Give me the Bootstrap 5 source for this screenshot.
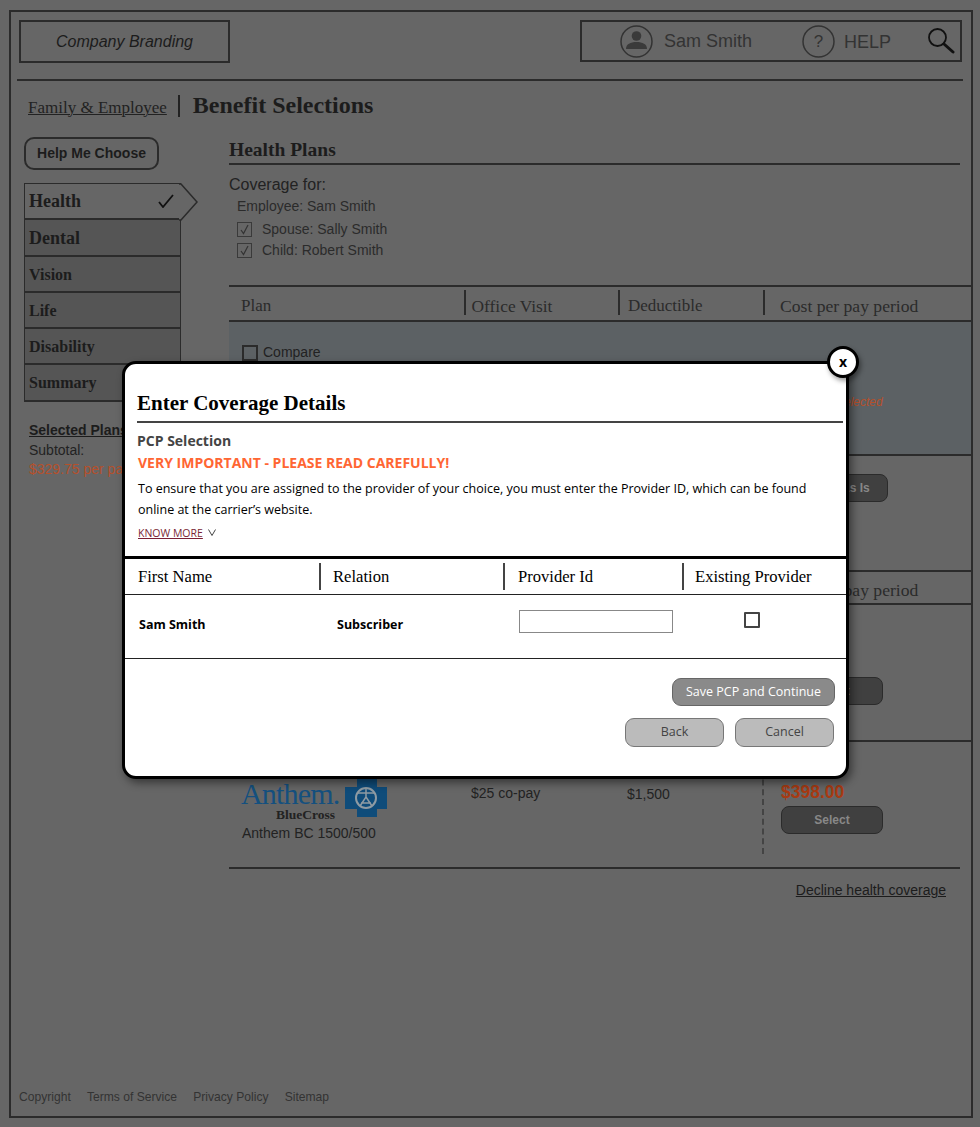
<!DOCTYPE html>
<html lang="en">
<head>
    <meta charset="UTF-8">
    <meta name="viewport" content="width=device-width, initial-scale=1.0">
    <title>Benefit Selections</title>
    <link rel="stylesheet" href="https://cdn.jsdelivr.net/npm/bootstrap@5.3.0/dist/css/bootstrap.min.css">
    <style>
        html, body { height: 1127px; overflow: hidden; }
        body { background: #666; color: #222; font-family: "Liberation Sans", Arial, sans-serif; position: relative; }
        .serif { font-family: "Liberation Serif", "Times New Roman", serif; }
        .opensans { font-family: "Open Sans", "Liberation Sans", sans-serif; }

        .page-frame { margin: 10px 0 0 9px; width: 964px; height: 1108px; border: 2px solid #2b2b2b; display: flex; flex-direction: column; }
        .top-bar { margin: 8px 9px 0 8px; height: 43px; }
        .brand-box { width: 211px; height: 43px; border: 2px solid #2b2b2b; font-style: italic; font-size: 16px; color: #1c1c1c; padding-top: 1px; }
        .user-box { width: 382px; height: 42px; border: 2px solid #2b2b2b; font-size: 18px; color: #333; padding-left: 38px; white-space: nowrap; }
        .user-box svg { flex: none; }
        .user-name { margin-left: 11px; }
        .help-icon { margin-left: 50px; }
        .help-label { font-size: 18px; margin: 2px 0 0 9px; }
        .search-icon { margin-left: 36px; margin-top: -2px; }
        .top-rule { margin: 16px 8px 0 6px; border-top: 2px solid #2b2b2b; }

        .crumbs { margin: 11px 0 0 17px; height: 27px; }
        .crumb-link { font-size: 17px; color: #222; text-decoration: underline; text-decoration-thickness: 1px; padding-top: 5px; }
        .crumb-bar { width: 2px; height: 22px; background: #222; margin: 1px 13px 0 11px; }
        .crumb-title { font-size: 24px; font-weight: 700; color: #1c1c1c; line-height: 27px; }

        .work-area { margin-top: 18px; flex: 1; min-height: 0; }
        .side-col { width: 175px; margin-left: 13px; flex: none; position: relative; }
        .help-btn { width: 135px; height: 33px; border: 2px solid #2b2b2b; border-radius: 10px; background: transparent; font-size: 14px; font-weight: 700; color: #1c1c1c; padding: 0; display: block; }
        .step-list { margin-top: 13px; width: 157px; border: 1.5px solid #2b2b2b; border-bottom-width: 2px; background: #555; position: relative; }
        .step-item { height: 36.3px; padding-left: 4px; font-weight: 700; font-size: 18px; color: #1c1c1c; border-bottom: 2px solid #2b2b2b; line-height: 36px; }
        .step-item:last-child { border-bottom: 0; height: 35px; }
        .step-small { font-size: 16px; }
        .step-active { background: #666; display: flex; align-items: center; justify-content: space-between; padding-right: 6px; }
        .step-arrow { position: absolute; left: 154px; top: -1.5px; }
        .selected-head { margin: 18px 0 0 5px; font-size: 14px; font-weight: 700; text-decoration: underline; color: #1c1c1c; white-space: nowrap; }
        .selected-sub { margin-left: 5px; font-size: 14px; line-height: 19px; white-space: nowrap; }
        .selected-cost { color: #b5502c; }

        .main-col { margin-left: 30px; flex: 1; min-width: 0; }
        .plans-title { font-size: 19.5px; font-weight: 700; color: #1c1c1c; height: 28px; line-height: 26px; margin-right: 11px; border-bottom: 2px solid #2b2b2b; }
        .coverage-head { font-size: 16px; margin-top: 10px; line-height: 20px; }
        .coverage-line { font-size: 14px; margin-left: 8px; line-height: 21px; display: flex; align-items: center; color: #2b2b2b; }
        .coverage-first { margin-top: 1px; margin-bottom: 2px; }
        .coverage-box { width: 15px; height: 15px; border: 1.5px solid #3a3a3a; margin-right: 10px; display: flex; align-items: center; justify-content: center; }

        .plan-head { height: 37px; border-top: 2px solid #2b2b2b; border-bottom: 2px solid #2b2b2b; font-size: 17px; color: #2b2b2b; margin-top: 24px; }
        .plan-head-low { height: 35px; margin-top: 0; }
        .col-plan { width: 234.5px; }
        .col-visit { width: 154.5px; }
        .col-ded { width: 145px; }
        .col-cost { flex: 1; }
        .head-cell { position: relative; line-height: 38px; white-space: nowrap; }
        .plan-head-low .head-cell { line-height: 36px; }
        .col-plan.head-cell { padding-left: 12px; }
        .col-visit.head-cell { padding-left: 8px; font-size: 17.4px; }
        .col-ded.head-cell { padding-left: 10px; }
        .col-cost.head-cell { padding-left: 17px; font-size: 17.6px; }
        .head-cell + .head-cell::before { content: ""; position: absolute; left: 0; top: 3px; height: 25px; width: 2px; background: #2b2b2b; }
        .plan-selected { height: 134px; background: #5c6164; border-bottom: 2px solid #2b2b2b; position: relative; padding: 20px 0 0 13px; font-size: 14px; }
        .compare-box { width: 16px; height: 16px; border: 2px solid #2b2b2b; margin-right: 5px; }
        .selected-note { position: absolute; left: 555px; top: 71px; font-size: 12px; font-style: italic; color: #b5502c; white-space: nowrap; }
        .plan-row { height: 114px; padding: 18px 0 0 551px; }
        .dark-btn { width: 102px; height: 28px; background: #404040; border: 1.5px solid #2b2b2b; border-radius: 8px; color: #888; font-size: 12px; font-weight: 700; padding: 0; white-space: nowrap; }
        .keep-btn { width: 108px; display: block; }
        .row-two { height: 137px; padding: 72px 0 0 552px; border-bottom: 2px solid #2b2b2b; }
        .row-three { height: 127px; margin-right: 11px; border-bottom: 2px solid #2b2b2b; display: flex; }
        .logo-cell { padding: 35px 0 0 12px; width: 242px; }
        .anthem-word { font-size: 30px; color: #14507f; line-height: 30px; letter-spacing: -.8px; margin-top: 2px; width: 99px; white-space: nowrap; }
        .anthem-sub { font-size: 13.5px; font-weight: 700; color: #222; line-height: 12px; text-align: right; padding-right: 5px; white-space: nowrap; }
        .anthem-name { font-size: 14px; line-height: 20px; margin: 2px 0 0 1px; }
        .anthem-mark { margin: 2px 0 0 5px; flex: none; }
        .money-visit { width: 156px; font-size: 14px; padding-top: 41px; }
        .money-ded { width: 136px; font-size: 14px; padding-top: 42px; }
        .cost-cell { position: relative; margin-left: 18px; padding-top: 40px; }
        .cost-line { position: absolute; left: -19px; top: 18px; height: 94px; border-left: 2px dashed #444; }
        .cost-value { font-size: 17.5px; font-weight: 700; color: #a83a12; line-height: 20px; margin-bottom: 4px; }
        .decline-link { margin: 11px 25px 0 0; font-size: 14px; text-decoration: underline; color: #1c1c1c; text-align: right; }
        .page-foot { margin: auto 0 10px 8px; font-size: 12.1px; color: #333; gap: 16.2px; }

        .dialog-box { position: absolute; left: 122px; top: 361px; width: 727px; height: 418px; background: #fff; border: 3px solid #000; border-radius: 14px; box-shadow: 3px 4px 8px rgba(0,0,0,.45); color: #000; }
        .dialog-close { position: absolute; right: -13px; top: -18px; width: 32px; height: 32px; border-radius: 50%; background: #fff; border: 3px solid #000; font-size: 14px; font-weight: 700; line-height: 22px; text-align: center; padding: 0; font-family: "Open Sans", sans-serif; box-shadow: 2px 3px 5px rgba(0,0,0,.4); }
        .dialog-top { padding: 25px 3px 0 12px; height: 192px; }
        .dialog-title { font-size: 21px; font-weight: 700; line-height: 28px; margin: 0; padding-bottom: 4px; border-bottom: 2px solid #444; }
        .pcp-label { font-size: 14px; font-weight: 700; color: #444; margin-top: 8px; line-height: 20px; }
        .pcp-warning { font-size: 14px; font-weight: 700; color: #ff6633; line-height: 20px; margin-top: 2px; padding-left: 1px; }
        .pcp-text { font-size: 12.5px; line-height: 21px; margin: 5px 0 0; padding-left: 1px; }
        .know-more { font-size: 10.5px; color: #7a1f35; text-decoration: underline; }
        .know-row { line-height: 14px; margin-top: 4px; padding-left: 1px; }
        .know-arrow { margin-left: 1px; }
        .pcp-head { height: 39px; border-top: 3px solid #000; border-bottom: 1.5px solid #222; font-size: 16.6px; white-space: nowrap; }
        .pcp-head > div { position: relative; padding-left: 13px; line-height: 35px; }
        .pcp-head > .pcp-col-b { padding-left: 12px; }
        .pcp-head > .pcp-col-d { padding-left: 11px; }
        .pcp-head > div + div::before { content: ""; position: absolute; left: -2px; top: 4px; height: 27px; width: 2px; background: #444; }
        .pcp-col-a { width: 196px; }
        .pcp-col-b { width: 184px; }
        .pcp-col-c { width: 179px; }
        .pcp-col-d { flex: 1; }
        .pcp-row { height: 64px; border-bottom: 1.5px solid #222; font-size: 12.5px; font-weight: 700; }
        .pcp-name { padding: 21px 0 0 14px; }
        .pcp-rel { padding: 21px 0 0 16px; }
        .pcp-input { width: 154px; height: 23px; border: 1.5px solid #888; margin: 15px 0 0 14px; display: block; border-radius: 0; padding: 0 4px; }
        .pcp-check { width: 16px; height: 16px; border: 2px solid #444; border-radius: 1px; margin: 17px 0 0 60px; }
        .dialog-actions { padding: 19px 11px 0 0; gap: 12px; }
        .save-btn { width: 163px; height: 28px; background: #8a8a8a; border: 1.5px solid #666; border-radius: 9px; color: #fff; font-size: 12.5px; padding: 0; }
        .soft-row { gap: 11px; margin-right: 1px; }
        .soft-btn { width: 99px; height: 29px; background: #bbb; border: 1.5px solid #777; border-radius: 9px; color: #444; font-size: 12.5px; padding: 0; }
    </style>
</head>
<body>
    <div class="page-frame">
        <!-- Header -->
        <div class="top-bar d-flex justify-content-between align-items-start">
            <div class="brand-box d-flex align-items-center justify-content-center">Company Branding</div>
            <div class="user-box d-flex align-items-center">
                <svg width="33" height="33" viewBox="0 0 33 33">
                    <circle cx="16.5" cy="16.5" r="15.5" fill="none" stroke="#333" stroke-width="1.5"/>
                    <circle cx="16.5" cy="11" r="4.8" fill="#3a3a3a"/>
                    <path d="M6 24c0-5 4.500-7 10.500-7s10.500 2 10.500 7z" fill="#3a3a3a"/>
                </svg>
                <span class="user-name">Sam Smith</span>
                <svg width="33" height="33" viewBox="0 0 33 33" class="help-icon">
                    <circle cx="16.5" cy="16.5" r="15.5" fill="none" stroke="#333" stroke-width="1.5"/>
                    <text x="16.5" y="22" text-anchor="middle" font-size="17" fill="#333" font-family="Liberation Sans, sans-serif">?</text>
                </svg>
                <span class="help-label">HELP</span>
                <svg class="search-icon" width="28" height="27" viewBox="0 0 28 27">
                    <circle cx="10.5" cy="10.5" r="8.5" fill="none" stroke="#111" stroke-width="1.8"/>
                    <path d="M17 17l9 8" stroke="#111" stroke-width="3" stroke-linecap="round"/>
                </svg>
            </div>
        </div>
        <div class="top-rule"></div>

        <!-- Breadcrumb -->
        <div class="crumbs d-flex align-items-center serif">
            <span class="crumb-link">Family &amp; Employee</span>
            <span class="crumb-bar"></span>
            <span class="crumb-title">Benefit Selections</span>
        </div>

        <div class="work-area d-flex">
            <!-- Left steps -->
            <div class="side-col">
                <button type="button" class="help-btn">Help Me Choose</button>
                <div class="step-list serif">
                    <div class="step-item step-active">
                        <span>Health</span>
                        <svg width="16" height="14" viewBox="0 0 16 14"><path d="M1 8l4 5L15 1" fill="none" stroke="#111" stroke-width="1.8"/></svg>
                    </div>
                    <svg class="step-arrow" width="20" height="38" viewBox="0 0 20 38"><path d="M0 1h2l16 18L2 37H0" fill="#666" stroke="#2b2b2b" stroke-width="1.5"/></svg>
                    <div class="step-item">Dental</div>
                    <div class="step-item step-small">Vision</div>
                    <div class="step-item step-small">Life</div>
                    <div class="step-item step-small">Disability</div>
                    <div class="step-item step-small">Summary</div>
                </div>
                <div class="selected-head">Selected Plans</div>
                <div class="selected-sub">Subtotal:</div>
                <div class="selected-sub selected-cost">$329.75 per pay period</div>
            </div>

            <!-- Plans -->
            <div class="main-col">
                <div class="plans-title serif">Health Plans</div>
                <div class="coverage-head">Coverage for:</div>
                <div class="coverage-line coverage-first">Employee: Sam Smith</div>
                <div class="coverage-line">
                    <span class="coverage-box"><svg width="11" height="11" viewBox="0 0 11 11"><path d="M2 6l2.500 3.500L9 1" fill="none" stroke="#333" stroke-width="1.2"/></svg></span>
                    Spouse: Sally Smith
                </div>
                <div class="coverage-line">
                    <span class="coverage-box"><svg width="11" height="11" viewBox="0 0 11 11"><path d="M2 6l2.500 3.500L9 1" fill="none" stroke="#333" stroke-width="1.2"/></svg></span>
                    Child: Robert Smith
                </div>

                <div class="plan-head d-flex serif">
                    <div class="head-cell col-plan">Plan</div>
                    <div class="head-cell col-visit">Office Visit</div>
                    <div class="head-cell col-ded">Deductible</div>
                    <div class="head-cell col-cost">Cost per pay period</div>
                </div>
                <div class="plan-selected">
                    <div class="d-flex align-items-center"><span class="compare-box"></span>Compare</div>
                    <div class="selected-note">Currently Selected</div>
                </div>
                <div class="plan-row">
                    <button type="button" class="dark-btn keep-btn">Keep It As Is</button>
                </div>
                <div class="plan-head plan-head-low d-flex serif">
                    <div class="head-cell col-plan">Plan</div>
                    <div class="head-cell col-visit">Office Visit</div>
                    <div class="head-cell col-ded">Deductible</div>
                    <div class="head-cell col-cost">Cost per pay period</div>
                </div>
                <div class="row-two">
                    <button type="button" class="dark-btn">Select</button>
                </div>
                <div class="row-three">
                    <div class="logo-cell">
                        <div class="d-flex align-items-start">
                            <div>
                                <div class="anthem-word serif">Anthem.</div>
                                <div class="anthem-sub serif">BlueCross</div>
                            </div>
                            <svg class="anthem-mark" width="42" height="38" viewBox="0 0 42 38">
                                <path d="M12 0h20v8h10v22H32v8H12v-8H0V8h12z" fill="#0f4c7a"/>
                                <circle cx="21" cy="19" r="10" fill="none" stroke="#8f9ba3" stroke-width="2"/>
                                <path d="M21 9v9M12 14h18M21 18l-6 9M21 18l6 9M16 24h10" stroke="#8f9ba3" stroke-width="1.5" fill="none"/>
                            </svg>
                        </div>
                        <div class="anthem-name">Anthem BC 1500/500</div>
                    </div>
                    <div class="money-visit">$25 co-pay</div>
                    <div class="money-ded">$1,500</div>
                    <div class="cost-cell">
                        <span class="cost-line"></span>
                        <div class="cost-value">$398.00</div>
                        <button type="button" class="dark-btn">Select</button>
                    </div>
                </div>
                <div class="decline-link">Decline health coverage</div>
            </div>
        </div>

        <div class="page-foot d-flex">
            <span>Copyright</span>
            <span>Terms of Service</span>
            <span>Privacy Policy</span>
            <span>Sitemap</span>
        </div>
    </div>

    <!-- Coverage dialog -->
    <div class="dialog-box">
        <button type="button" class="dialog-close">x</button>
        <div class="dialog-top">
            <h2 class="dialog-title serif">Enter Coverage Details</h2>
            <div class="pcp-label opensans">PCP Selection</div>
            <div class="pcp-warning opensans">VERY IMPORTANT - PLEASE READ CAREFULLY!</div>
            <p class="pcp-text opensans">To ensure that you are assigned to the provider of your choice, you must enter the Provider ID, which can be found online at the carrier’s website.</p>
            <div class="know-row opensans">
                <a href="#" class="know-more">KNOW MORE</a>
                <svg class="know-arrow" width="8" height="7" viewBox="0 0 8 7"><path d="M.5.5L4 6.500 7.500.5" fill="none" stroke="#444" stroke-width="1"/></svg>
            </div>
        </div>
        <div class="pcp-head d-flex serif">
            <div class="pcp-col-a">First Name</div>
            <div class="pcp-col-b">Relation</div>
            <div class="pcp-col-c">Provider Id</div>
            <div class="pcp-col-d">Existing Provider</div>
        </div>
        <div class="pcp-row d-flex opensans">
            <div class="pcp-col-a pcp-name">Sam Smith</div>
            <div class="pcp-col-b pcp-rel">Subscriber</div>
            <div class="pcp-col-c"><input type="text" class="pcp-input"></div>
            <div class="pcp-col-d"><div class="pcp-check"></div></div>
        </div>
        <div class="dialog-actions d-flex flex-column align-items-end opensans">
            <button type="button" class="save-btn">Save PCP and Continue</button>
            <div class="soft-row d-flex">
                <button type="button" class="soft-btn">Back</button>
                <button type="button" class="soft-btn">Cancel</button>
            </div>
        </div>
    </div>

    <script src="https://cdn.jsdelivr.net/npm/bootstrap@5.3.0/dist/js/bootstrap.bundle.min.js"></script>
</body>
</html>
